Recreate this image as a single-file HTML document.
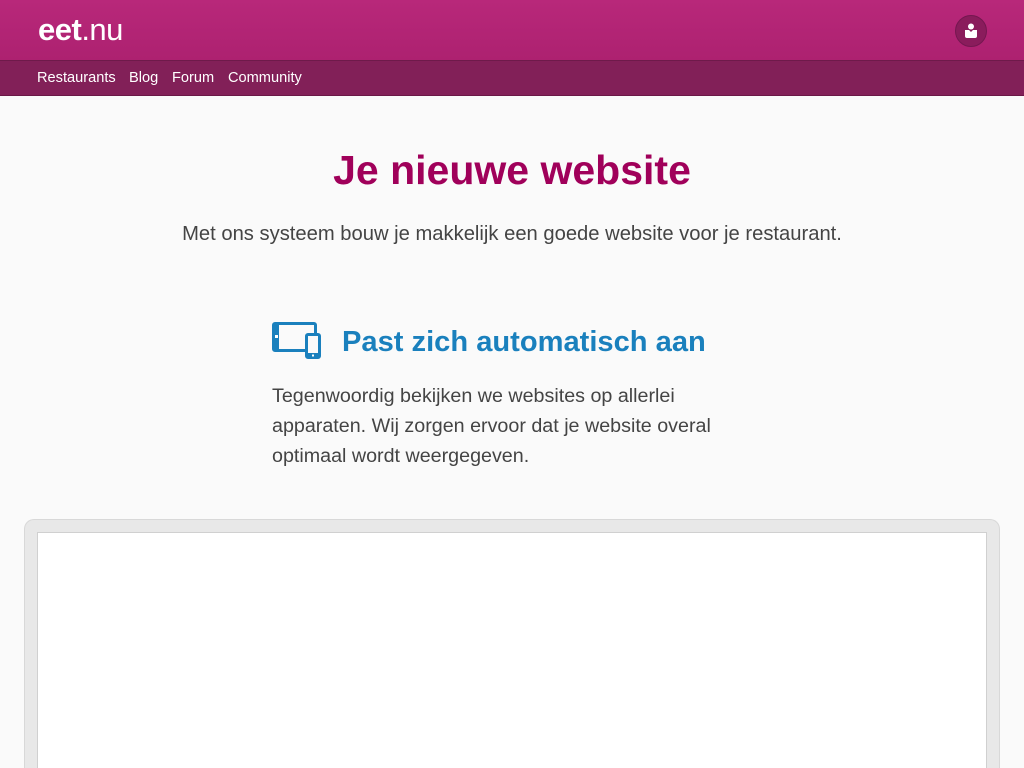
<!DOCTYPE html>
<html><head><meta charset="utf-8"><style>
*{margin:0;padding:0;box-sizing:border-box}
html,body{width:1024px;height:768px;overflow:hidden}
body{background:#fafafa;font-family:"Liberation Sans",Arial,sans-serif;position:relative}
.top{position:absolute;left:0;top:0;width:1024px;height:60px;background:linear-gradient(#b8287a,#ad2170)}
.nav{position:absolute;left:0;top:60px;width:1024px;height:36px;background:#822058;border-top:1px solid #6e1a4a;border-bottom:1px solid #6a1846}
.nav a{position:absolute;top:9px;color:#fff;font-size:14.6px;text-decoration:none}
.logo{position:absolute;left:38px;top:12px;color:#fff;font-size:31px;letter-spacing:-0.5px}
.user{position:absolute;left:955px;top:15px;width:32px;height:32px;border-radius:50%;background:#8a1c5c;border:1px solid #741750}
h1{position:absolute;left:0;width:1024px;top:147px;text-align:center;color:#a0005a;font-size:41px;font-weight:bold}
.sub{position:absolute;left:0;width:1024px;top:223px;text-align:center;color:#444;font-size:20.2px}
h2{position:absolute;left:342px;top:326px;color:#1a80bd;font-size:29.1px;font-weight:bold}
.p{position:absolute;left:272px;top:381px;width:480px;color:#444;font-size:19.7px;line-height:30px}
.frame{position:absolute;left:24px;top:519px;width:976px;height:249px;background:#e8e8e8;border:1px solid #d8d8d8;border-bottom:none;border-radius:10px 10px 0 0}
.inner{position:absolute;left:37px;top:532px;width:950px;height:236px;background:#fff;border:1px solid #d0d0d0;border-bottom:none}
</style></head><body>
<div class="top">
<div class="logo"><span style="font-weight:bold">eet</span>.nu</div>
<div class="user"><svg width="32" height="32" viewBox="0 0 32 32" style="position:absolute;left:-1px;top:-1px"><circle cx="16" cy="11.5" r="3" fill="#fff"/><path d="M10 15h4l2 2 2-2h4v6a2 2 0 0 1-2 2h-8a2 2 0 0 1-2-2z" fill="#fff"/></svg></div>
</div>
<div class="nav"><a style="left:37px">Restaurants</a><a style="left:129px">Blog</a><a style="left:172px">Forum</a><a style="left:228px">Community</a></div>
<h1>Je nieuwe website</h1>
<div class="sub">Met ons systeem bouw je makkelijk een goede website voor je restaurant.</div>
<svg style="position:absolute;left:272px;top:322px" width="50" height="38" viewBox="0 0 50 38"><rect x="1.5" y="1.5" width="42" height="27" rx="1.5" fill="none" stroke="#1a80bd" stroke-width="3"/><rect x="1" y="1" width="6" height="28" fill="#1a80bd"/><rect x="3" y="13" width="3" height="3" fill="#fff"/><rect x="33" y="11" width="16" height="26" rx="2" fill="#fafafa"/><rect x="34.5" y="12.5" width="13" height="23" rx="1.5" fill="none" stroke="#1a80bd" stroke-width="3"/><rect x="34" y="31" width="14" height="5" fill="#1a80bd"/><rect x="40" y="32.5" width="2" height="2" fill="#fff"/></svg>
<h2>Past zich automatisch aan</h2>
<div class="p">Tegenwoordig bekijken we websites op allerlei apparaten. Wij zorgen ervoor dat je website overal optimaal wordt weergegeven.</div>
<div class="frame"></div><div class="inner"></div>
</body></html>
